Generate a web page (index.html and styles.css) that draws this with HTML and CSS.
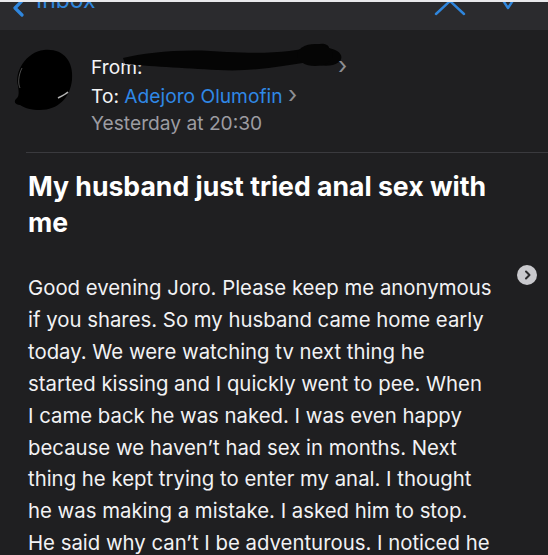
FILE: index.html
```html
<!DOCTYPE html>
<html>
<head>
<meta charset="utf-8">
<link rel="stylesheet" href="styles.css">
</head>
<body>
<div class="screen">
  <div class="topstrip"></div>
  <nav class="navbar">
    <div class="back">
      <svg class="back-chev" width="20" height="16" viewBox="0 0 20 16"><path d="M17 -6 L5 6 L12 13" fill="none" stroke="#2f86dd" stroke-width="3.2" stroke-linecap="round" stroke-linejoin="round"/></svg>
      <span class="back-label">Inbox</span>
    </div>
    <div class="nav-actions">
      <svg width="36" height="16" viewBox="0 0 36 16"><path d="M4 12 L18 -1 L32 12" fill="none" stroke="#2f86dd" stroke-width="2.4" stroke-linecap="round" stroke-linejoin="round"/></svg>
      <svg width="20" height="12" viewBox="0 0 20 12"><path d="M2 -6 L10 6 L18 -6" fill="none" stroke="#2f86dd" stroke-width="2.4" stroke-linecap="round" stroke-linejoin="round"/></svg>
    </div>
  </nav>
  <main class="content">
    <section class="header">
      <svg class="avatar" width="64" height="66" viewBox="0 0 64 66">
        <path d="M32 2 C50 0 62 12 60 32 C58 50 46 62 28 62 C20 62 12 60 8 57 C3 57 1 53 5 50 C7 48 7 44 6 38 C2 24 14 4 32 2 Z" fill="#000"/>
        <path d="M10 20 C6 28 6 36 8 40" fill="none" stroke="#bbb" stroke-width="0.8" opacity="0.5"/>
        <path d="M46 50 C50 48 54 46 56 44" fill="none" stroke="#ddd" stroke-width="1.6" opacity="0.8"/>
      </svg>
      <div class="meta">
        <div class="meta-line from">
          <span class="from-label">From:</span>
          <svg class="scribble" width="230" height="40" viewBox="0 0 230 40">
            <path d="M6 18 C30 12 70 8 110 12 C150 14 180 12 196 6 C204 2 212 4 212 8 C222 10 228 16 222 22 C214 28 201 26 192 22 C166 26 136 32 101 30 C66 28 30 26 8 24 Z" fill="#050505"/>
            <ellipse cx="198" cy="15" rx="18" ry="11" fill="#050505"/>
          </svg>
          <span class="chev">›</span>
        </div>
        <div class="meta-line to">
          <span class="to-label">To:</span> <span class="to-name">Adejoro Olumofin</span> <span class="chev">›</span>
        </div>
        <div class="meta-line date">Yesterday at 20:30</div>
      </div>
    </section>
    <div class="separator"></div>
    <h1 class="subject">My husband just tried anal sex with<br>me</h1>
    <div class="body">
      <span class="badge"><svg width="8" height="10" viewBox="0 0 8 10"><path d="M2 1.5 L5.5 5 L2 8.5" fill="none" stroke="#2a2a2c" stroke-width="2" stroke-linecap="round" stroke-linejoin="round"/></svg></span>
      <p>Good evening Joro. Please keep me anonymous<br>if you shares. So my husband came home early<br>today. We were watching tv next thing he<br>started kissing and I quickly went to pee. When<br>I came back he was naked. I was even happy<br>because we haven’t had sex in months. Next<br>thing he kept trying to enter my anal. I thought<br>he was making a mistake. I asked him to stop.<br>He said why can’t I be adventurous. I noticed he</p>
    </div>
  </main>
</div>
</body>
</html>
```
FILE: styles.css
```css
* { box-sizing: border-box; }
html, body { margin: 0; padding: 0; }
body {
  background: #1f1f21;
  font-family: Inter, "Liberation Sans", sans-serif;
  color: #f2f2f4;
  width: 548px;
  height: 555px;
  overflow: hidden;
}
.screen { width: 548px; height: 555px; overflow: hidden; }
.topstrip { height: 2px; background: #e9e9ec; }
.navbar {
  height: 28px;
  background: #2b2b2e;
  display: flex;
  justify-content: space-between;
  align-items: flex-start;
  overflow: hidden;
}
.back { display: flex; align-items: flex-start; padding-left: 10px; }
.back-chev { display: block; }
.back-label {
  color: #2f86dd;
  font-size: 23px;
  line-height: 22px;
  margin-top: -13px;
  margin-left: 6px;
}
.nav-actions {
  display: flex;
  align-items: flex-start;
  gap: 30px;
  padding-right: 30px;
}
.nav-actions svg { display: block; }
.content { background: #1f1f21; }
.header {
  display: flex;
  align-items: flex-start;
  padding: 18px 0 0 12px;
  height: 122px;
}
.avatar { display: block; flex: none; }
.meta { margin-left: 15px; padding-top: 4px; }
.meta-line {
  font-size: 19.2px;
  line-height: 27px;
  white-space: nowrap;
  position: relative;
}
.from { color: #f4f4f6; }
.scribble {
  position: absolute;
  left: 26px;
  top: -12px;
}
.from .chev { margin-left: 190px; position: relative; }
.chev { color: #8e8e93; font-size: 24px; }
.to-label { color: #f4f4f6; }
.to-name { color: #2f88e6; }
.date { color: #9c9ca1; }
.separator {
  height: 1px;
  background: #3a3a3e;
  margin-left: 26px;
}
.subject {
  margin: 15px 0 0 0;
  padding: 0 20px 0 28px;
  font-size: 26.6px;
  line-height: 36px;
  font-weight: 700;
  color: #ffffff;
  white-space: nowrap;
}
.body {
  position: relative;
  padding: 32px 10px 0 28px;
}
.body p {
  margin: 0;
  font-size: 20.35px;
  line-height: 31.9px;
  color: #f2f2f4;
  white-space: nowrap;
}
.badge {
  position: absolute;
  left: 517px;
  top: 25px;
  width: 20px;
  height: 20px;
  border-radius: 50%;
  background: #c9c9cd;
  display: flex;
  align-items: center;
  justify-content: center;
}
.badge svg { display: block; margin-left: 1px; }
```
